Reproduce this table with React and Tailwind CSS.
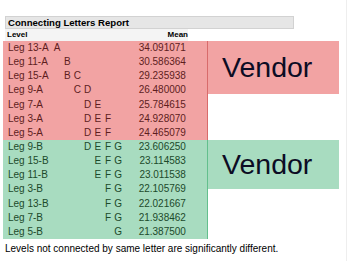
import React from "react";

const red = [
  ["Leg 13-A", "A", "34.091071"],
  ["Leg 11-A", "B", "30.586364"],
  ["Leg 15-A", "BC", "29.235938"],
  ["Leg 9-A", "CD", "26.480000"],
  ["Leg 7-A", "DE", "25.784615"],
  ["Leg 3-A", "DEF", "24.928070"],
  ["Leg 5-A", "DEF", "24.465079"],
];
const green = [
  ["Leg 9-B", "DEFG", "23.606250"],
  ["Leg 15-B", "EFG", "23.114583"],
  ["Leg 11-B", "EFG", "23.011538"],
  ["Leg 3-B", "FG", "22.105769"],
  ["Leg 13-B", "FG", "22.021667"],
  ["Leg 7-B", "FG", "21.938462"],
  ["Leg 5-B", "G", "21.387500"],
];
const LETTERS = ["A", "B", "C", "D", "E", "F", "G"];

function Row({ r, text }) {
  return (
    <div className={`flex items-center h-[14.15px] text-[10px] leading-none ${text}`}>
      <div className="w-[49px] pl-[5px] whitespace-nowrap">{r[0]}</div>
      {LETTERS.map((l) => (
        <div key={l} className="w-[10.2px] text-center">
          {r[1].includes(l) ? l : ""}
        </div>
      ))}
      <div className="w-[62.6px] text-right">{r[2]}</div>
    </div>
  );
}

function Section({ rows, bg, line, text, boxH }) {
  return (
    <div className="flex">
      <div className={`w-[204px] ${bg}`}>
        {rows.map((r) => (
          <Row key={r[0]} r={r} text={text} />
        ))}
      </div>
      <div className={`w-px ${line}`} />
      <div
        className={`w-[131px] ${boxH} ${bg} flex items-center pl-[14px] text-[28.5px] leading-none text-[#0c0c24]`}
      >
        Vendor
      </div>
    </div>
  );
}

export default function App() {
  return (
    <div
      className="relative w-[351px] h-[261px] bg-white pl-[3px] pt-[16px]"
      style={{ fontFamily: '"Liberation Sans", Arial, sans-serif' }}
    >
      <div className="absolute top-0 bottom-0 left-[346px] w-px bg-[#eeeeee]" />
      <div className="ml-[2px] w-[289px] h-[13px] bg-[#e6e6e6] border border-[#d2d2d2] flex items-center pl-[2px] text-[9.6px] font-bold text-black leading-none whitespace-nowrap">
        Connecting Letters Report
      </div>
      <div className="flex items-center h-[12px] w-[183px] ml-[2px] bg-[#f4f4f4] text-[8px] font-bold leading-none text-black">
        <div className="pl-[2px]">Level</div>
        <div className="ml-auto">Mean</div>
      </div>
      <Section
        rows={red}
        bg="bg-[#f2a3a3]"
        line="bg-[#d86b6b]"
        text="text-[#5e1d1d]"
        boxH="h-[53px]"
      />
      <Section
        rows={green}
        bg="bg-[#a8dcc0]"
        line="bg-[#63bf8d]"
        text="text-[#1c4a2b]"
        boxH="h-[49px]"
      />
      <div className="mt-[5px] ml-[2px] text-[10px] leading-none text-black whitespace-nowrap">
        Levels not connected by same letter are significantly different.
      </div>
    </div>
  );
}
